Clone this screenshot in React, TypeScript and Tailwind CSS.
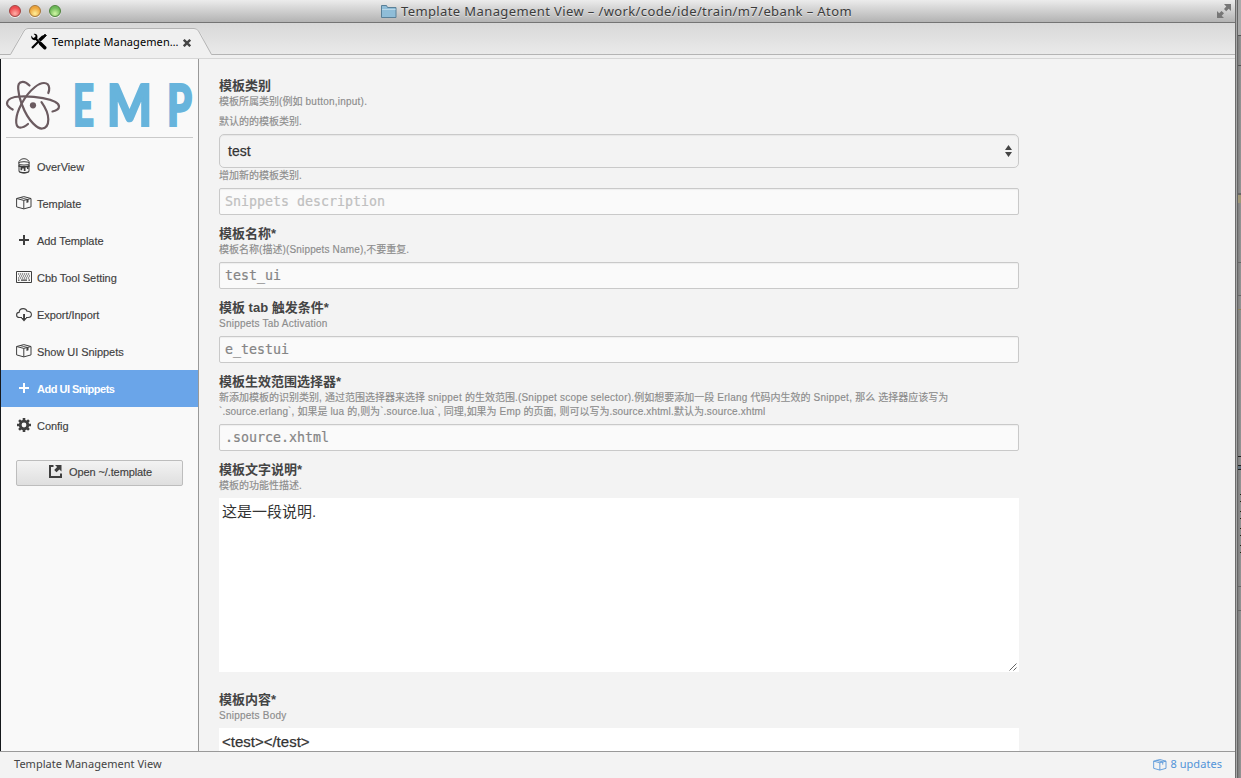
import React from "react";

type IconProps = { className?: string };

const Paintcan = ({ className = "" }: IconProps) => (
  <svg width="16" height="16" viewBox="0 0 16 16" className={className} fill="none" stroke="currentColor">
    <path d="M2.600 5.500C2.600 2.600 5 .7 8 .7s5.400 1.900 5.400 4.800" strokeWidth="1" />
    <ellipse cx="8" cy="5.400" rx="5.300" ry="1.700" strokeWidth="1" />
    <path d="M3 6v7.200c0 1 2 1.700 5 1.700s5-.7 5-1.700V6" />
    <path
      d="M2.500 6.500c1 1.200 3 1.600 5.500 1.600s4.500-.4 5.500-1.600V9h-1v2h-1.500V9.500H9.500V13H7.800v-2.500H6.200v1.800H4.500V9h-2z M3 13c1 .7 3 1 5 1s4-.3 5-1v1c-1 1-3 1.400-5 1.400S4 15 3 14z"
      fill="currentColor"
      stroke="none"
    />
  </svg>
);

const Package = ({ className = "" }: IconProps) => (
  <svg width="16" height="14" viewBox="0 0 16 14" className={className} fill="none" stroke="currentColor">
    <path d="M.6 2.500v8.400l7.200 2 7.200-2V2.500L7.800.6z M.6 2.500l7.200 1.900L15 2.500M7.800 4.400v8.500" strokeWidth="1" />
    <path d="M4 1.500l7.200 1.900" strokeWidth=".8" />
    <path d="M10.500 3.800l2-.6v3l-2 .7z" fill="currentColor" stroke="none" />
  </svg>
);

const Plus = ({ className = "" }: IconProps) => (
  <svg width="16" height="16" viewBox="0 0 16 16" className={className} fill="currentColor">
    <path d="M7 3h2v4h4v2H9v4H7V9H3V7h4z" />
  </svg>
);

const Keyboard = ({ className = "" }: IconProps) => (
  <svg width="16" height="12" viewBox="0 0 16 12" className={className} fill="none" stroke="currentColor">
    <path d="M.5.5h15v11H.5z" />
    <path d="M2 3h12M3 5h11M2 7h12" strokeDasharray="1.200 .8" strokeWidth="1.100" />
    <path d="M2 9.200h1.500M5 9.200h6M12.500 9.200H14" strokeWidth="1.200" />
  </svg>
);

const Cloud = ({ className = "" }: IconProps) => (
  <svg width="16" height="14" viewBox="0 0 16 14" className={className} fill="none" stroke="currentColor">
    <path d="M6 9.500H3.500C1.700 9.500.6 8.300.6 6.900c0-1.500 1.100-2.500 2.500-2.500C3.300 2 5 .6 7.200.6c2 0 3.300 1 3.900 2.700 2.500-.2 4.300 1.100 4.300 3.200 0 1.900-1.500 3-3.400 3h-2" strokeWidth="1.100" />
    <path d="M7.100 6h1.900v4h2L8 13.600 5 10h2.100z" fill="currentColor" stroke="none" />
  </svg>
);

const Gear = ({ className = "" }: IconProps) => (
  <svg width="14" height="14" viewBox="0 0 14 14" className={className}>
    <g stroke="currentColor" strokeWidth="2.600">
      <path d="M7 0v14M0 7h14M2.050 2.050l9.900 9.900M11.950 2.050l-9.900 9.900" />
    </g>
    <circle cx="7" cy="7" r="5.200" fill="currentColor" />
    <circle cx="7" cy="7" r="2.400" fill="#f9f9f9" />
  </svg>
);

const External = () => (
  <svg width="13" height="13" viewBox="0 0 13 13" fill="none" stroke="currentColor" className="-mt-0.5">
    <path d="M4.500 1H1v11h11V8.500" strokeWidth="2" />
    <path d="M6 0h6.500v6.500l-2.100-2.100L7.500 7.300 5.200 5l2.900-2.900z" fill="currentColor" stroke="none" />
  </svg>
);

const Tools = () => (
  <svg width="17" height="17" viewBox="0 0 17 17" fill="none" stroke="#000">
    <path d="M4.500 4.500l7.500 7.500" strokeWidth="2" />
    <path d="M10.500 10.500l4.300 4.300" strokeWidth="3.400" strokeLinecap="round" />
    <path d="M1.500 2.500L3 5l2.200-.4.300-2L3.600.9c2-.6 4 .6 3.900 3L7 6.500 4.800 7.200C2.300 7.300.7 5 1.500 2.500z" fill="#000" stroke="none" />
    <path d="M9.300 7.500L13.500 3.500" strokeWidth="3.400" />
    <path d="M13 3.200l2-2 1.300 1.300-2 2z" fill="#000" />
    <path d="M8.500 8.500L2 15" strokeWidth="2.200" />
  </svg>
);

const Logo = () => (
  <svg width="192" height="56" viewBox="0 0 192 56" className="block overflow-visible">
    <g fill="none" stroke="#6b5b60" strokeWidth="2.200" strokeLinecap="round">
      <path d="M6.700 32.500C4 31 1 29 1 26.500 1 22 7 19.700 14 19.500c8-.3 16 .3 23 1.700 9 1.800 16 4.300 16 8.300 0 2.500-3 4.200-6.500 5" />
      <path d="M23.500 8.500C21 6 19 4.700 16.700 4.800 12.500 5 12 8 12.200 12c.3 4.500 1.500 10 3.500 15 3 8 7.300 15.500 11.600 19.600 3 3 6 5.300 9 4.900 4.500-.6 6-4 6-9 0-5.500-3-12-6.800-17.300" />
      <path d="M22 47c-3 2.500-6 4-8.700 3.500C10.500 50 10 47 10.200 43c.3-5 2.500-11 5.500-16.500C19.500 19.500 24 14 29 10c3-2.500 6-4 9-4 4 0 5 2.500 5.200 5 .1 1.800-.3 3.500-.9 5" />
    </g>
    <circle cx="27" cy="28.300" r="3.100" fill="#6b5b60" />
    <g fill="#67b4dc" stroke="#67b4dc" strokeWidth="2.200" fontFamily="Lato" fontWeight="900" fontSize="57">
      <text x="67" y="49" textLength="21" lengthAdjust="spacingAndGlyphs">E</text>
      <text x="101" y="49" textLength="45" lengthAdjust="spacingAndGlyphs">M</text>
      <text x="161" y="49" textLength="25" lengthAdjust="spacingAndGlyphs">P</text>
    </g>
  </svg>
);

const NAV = [
  { label: "OverView", icon: <Paintcan className="-mt-1" /> },
  { label: "Template", icon: <Package className="-mt-1" /> },
  { label: "Add Template", icon: <Plus className="-mt-1" /> },
  { label: "Cbb Tool Setting", icon: <Keyboard className="-mt-1" /> },
  { label: "Export/Inport", icon: <Cloud className="-mt-px" /> },
  { label: "Show UI Snippets", icon: <Package className="-mt-1" /> },
  { label: "Add UI Snippets", icon: <Plus className="-mt-1" />, active: true },
  { label: "Config", icon: <Gear className="-mt-1" /> },
];

const Label = ({ children }: { children: React.ReactNode }) => (
  <div className="mb-px h-[17px] whitespace-nowrap text-[13px] font-bold leading-[17px] text-[#444]">{children}</div>
);

// Latin runs are tracked slightly wider than the ideographs around them.
const Hint = ({ text, tight }: { text: string; tight?: boolean }) => (
  <div className="whitespace-nowrap text-[10px] leading-[14px] text-[#8c8c8c] [-webkit-text-stroke:0.15px_#8c8c8c]">
    {text.split(/([\x20-\x7e]+)/).map((run, i) =>
      i % 2 ? (
        <span key={i} className={tight ? "tracking-[0.16px]" : "tracking-[0.23px]"}>
          {run}
        </span>
      ) : (
        run
      ),
    )}
  </div>
);

const Field = ({ children, placeholder }: { children: React.ReactNode; placeholder?: boolean }) => (
  <div
    className={`mt-[5px] h-[27px] rounded-[2px] border border-[#c9c9c9] bg-[#fafafa] pl-[5px] font-['DejaVu_Sans_Mono',monospace] text-[13.3px] leading-[25px] shadow-[inset_0_1px_1px_#eee] [-webkit-text-stroke:0.2px_currentColor] ${
      placeholder ? "text-[#c0c0c0]" : "text-[#858585]"
    }`}
  >
    {children}
  </div>
);

const Light = ({ className }: { className: string }) => (
  <span className={`h-3 w-3 rounded-full border shadow-[0_1px_0_#eee] ${className}`} />
);

export default function App() {
  return (
    <div className="flex h-[778px] w-[1241px] overflow-hidden bg-[#8e8e8e] font-['Liberation_Sans','Noto_Sans_CJK_SC',sans-serif] text-[#444]">
      <div className="flex w-[1235px] flex-col bg-[#f3f3f3]">
        <header className="flex h-[23px] shrink-0 items-center border-b border-[#747474] bg-gradient-to-b from-[#ececec] to-[#b3b3b3] font-['Noto_Sans',sans-serif]">
          <div className="flex w-[380px] gap-2 pl-[9px]">
            <Light className="border-[#a24442] bg-[radial-gradient(circle_at_50%_75%,#ffb0a8,#ee4c50_65%)]" />
            <Light className="border-[#a8783a] bg-[radial-gradient(circle_at_50%_75%,#ffef9a,#eda53c_65%)]" />
            <Light className="border-[#4f843d] bg-[radial-gradient(circle_at_50%_75%,#d2f7a5,#6cb857_65%)]" />
          </div>
          <svg width="18" height="15" viewBox="0 0 18 15">
            <path d="M1.500 13.500v-12h5l1 2h8.500v10z" fill="#8fbdd8" stroke="#5a8098" />
            <path d="M2 5.500h13.500" stroke="#b7d7e8" />
          </svg>
          <span className="ml-[3px] mt-[2px] whitespace-nowrap text-[13px] tracking-[0.39px] text-[#3c3c3c] [text-shadow:0_1px_0_#e4e4e4]">
            Template Management View – /work/code/ide/train/m7/ebank – Atom
          </span>
          <svg width="16" height="16" viewBox="0 0 16 16" className="ml-auto mr-[3px]" fill="#777">
            <path d="M8 1h7v7l-2.300-2.300-2.500 2.500L8 6l2.300-2.500z M8 15H1V8l2.200 2.200L5.500 8 8 10.300l-2.300 2.400z" />
          </svg>
        </header>

        <div className="h-[36px] shrink-0 border-b border-[#d6d6d6] bg-gradient-to-b from-[#d8d8d8] to-[#ececec]">
          <div className="grid h-[35px] [grid-template-areas:'bar']">
            <svg width="1235" height="35" viewBox="0 0 1235 35" className="[grid-area:bar]">
              <path d="M0 31.500h10C15 26 19 10 26 5.500h170C204 10 205 24 211.500 31.500H1235V35H0z" fill="#f0f0f0" />
              <path d="M0 31.500h10.500L24 8q1.500-2.500 4-2.500h166q3 0 4.500 2.500l13 23.500H1235" fill="#f0f0f0" stroke="#b4b4b4" />
            </svg>
            <div className="flex h-[35px] items-start pl-[30px] pt-[10px] [grid-area:bar]">
              <Tools />
              <span className="ml-[5px] whitespace-nowrap font-['Noto_Sans',sans-serif] text-[11px] leading-[18px] tracking-[0.1px] text-black">
                Template Managemen…
              </span>
              <svg width="8" height="8" viewBox="0 0 8 8" className="ml-1 mt-[6px]" stroke="#444" strokeWidth="2.400">
                <path d="M.8.8l6.400 6.400M7.200.8L.8 7.200" />
              </svg>
            </div>
          </div>
        </div>

        <div className="flex min-h-0 flex-1">
          <aside className="w-[199px] shrink-0 border-l border-r border-l-[#15181c] border-r-[#999] bg-[#f9f9f9]">
            <div className="ml-[5px] mr-[5px] h-[79px] border-b border-[#cacaca] pt-[18px]">
              <Logo />
            </div>
            <nav className="mt-[10px]">
              {NAV.map((n) => (
                <div
                  key={n.label}
                  className={`flex h-[37px] items-center pl-[15px] pt-[2px] text-[11px] ${
                    n.active ? "bg-[#6aa5e9] font-bold tracking-[-0.5px] text-white" : "tracking-[-0.05px] text-[#3f3f3f] [-webkit-text-stroke:0.15px_#3f3f3f]"
                  }`}
                >
                  <span className="flex w-4 justify-center">{n.icon}</span>
                  <span className="ml-[5px] whitespace-nowrap">{n.label}</span>
                </div>
              ))}
            </nav>
            <div className="ml-[15px] mt-[16px] flex h-[26px] w-[167px] items-center justify-center gap-[7px] rounded-[2px] border border-[#bdbdbd] bg-gradient-to-b from-[#f3f3f3] to-[#dfdfdf] pb-px pl-[2px] text-[11px] tracking-[-0.1px] text-[#3f3f3f] [-webkit-text-stroke:0.15px_#3f3f3f]">
              <External />
              <span>Open ~/.template</span>
            </div>
          </aside>

          <main className="min-w-0 flex-1 overflow-hidden pl-[20px] pt-[18px]">
            <div className="w-[800px]">
              <Label>模板类别</Label>
              <Hint text="模板所属类别(例如 button,input)." />
              <div className="mt-[6px]">
                <Hint text="默认的的模板类别." />
              </div>
              <div className="mt-[5px] flex h-[34px] items-center justify-between rounded-[5px] border border-[#c9c9c9] pl-[8px] pr-[6px] text-[14px] text-[#333] shadow-[inset_0_1px_1px_#e6e6e6] [-webkit-text-stroke:0.25px_#333]">
                <span>test</span>
                <svg width="7" height="12" viewBox="0 0 7 12" fill="#444">
                  <path d="M3.500 0L7 5H0zM3.500 12L7 7H0z" />
                </svg>
              </div>
              <div className="mt-px">
                <Hint text="增加新的模板类别." />
              </div>
              <div className="mb-[10px] mt-[5px]">
                <Field placeholder>Snippets description</Field>
              </div>

              <Label>模板名称*</Label>
              <Hint tight text="模板名称(描述)(Snippets Name),不要重复." />
              <Field>test_ui</Field>

              <div className="mt-[10px]">
                <Label>模板 tab 触发条件*</Label>
                <Hint text="Snippets Tab Activation" />
                <Field>e_testui</Field>
              </div>

              <div className="mt-[10px]">
                <Label>模板生效范围选择器*</Label>
                <Hint text="新添加模板的识别类别, 通过范围选择器来选择 snippet 的生效范围.(Snippet scope selector).例如想要添加一段 Erlang 代码内生效的 Snippet, 那么 选择器应该写为" />
                <Hint tight text="`.source.erlang`, 如果是 lua 的,则为`.source.lua`, 同理,如果为 Emp 的页面, 则可以写为.source.xhtml.默认为.source.xhtml" />
                <Field>.source.xhtml</Field>
              </div>

              <div className="mt-[10px]">
                <Label>模板文字说明*</Label>
                <Hint text="模板的功能性描述." />
                <div className="mt-[5px] flex h-[174px] items-start justify-between bg-white pl-[3px] pt-[4px] text-[15px] leading-[19px] text-[#333]">
                  <span>这是一段说明.</span>
                  <svg width="8" height="8" viewBox="0 0 8 8" className="mb-[1px] mr-[2px] self-end" stroke="#555" strokeWidth=".9">
                    <path d="M.5 7.500l7-7M4.500 7.500l3-3" />
                  </svg>
                </div>
              </div>

              <div className="mt-[19px]">
                <Label>模板内容*</Label>
                <Hint text="Snippets Body" />
                <div className="mt-[5px] h-[60px] bg-white pl-[3px] pt-[4px] text-[15px] leading-[19px] text-[#333] [-webkit-text-stroke:0.25px_#333]">
                  &lt;test&gt;&lt;/test&gt;
                </div>
              </div>
            </div>
          </main>
        </div>

        <footer className="flex h-[27px] shrink-0 items-center justify-between border-t border-[#999] pb-px pl-[14px] pr-[13px] font-['Noto_Sans',sans-serif] text-[11px]">
          <span className="tracking-[0.03px]">Template Management View</span>
          <span className="flex items-center gap-[3px] text-[#5293d8]">
            <svg width="14" height="12" viewBox="0 0 16 14" fill="none" stroke="currentColor">
              <path d="M.6 2.500v8.400l7.200 2 7.200-2V2.500L7.800.6z M.6 2.500l7.200 1.900L15 2.500M7.800 4.400v8.500M4 1.500l7.200 1.900v3.200" />
            </svg>
            <span className="tracking-[0.05px]">8 updates</span>
          </span>
        </footer>
      </div>

      <div className="w-px bg-[#6c6c6c]" />
      <div className="w-px bg-[#a8a8a8]" />
      <div className="w-px bg-[#656565]" />
      <div className="flex flex-1 flex-col bg-gradient-to-r from-[#7c7c7c] to-[#969696]">
        <div className="h-[36px] border-b border-[#555] bg-[#aaa]" />
        <div className="h-[30px] border-b border-[#555]" />
        <div className="h-[129px] border-b-2 border-[#666]" />
        <div className="h-[8px] bg-[#a19879]" />
        <div className="h-[60px] border-b border-[#666]" />
        <div className="h-[33px] border-b border-[#666]" />
        <div className="h-[14px] border-b border-[#8c825c]" />
        <div className="h-[147px] border-b border-[#222]" />
        <div className="mt-2 h-[5px] border-y border-[#222] bg-[#62717c]" />
        <div className="ml-[2px] mt-6 flex flex-col gap-[9px]">
          <div className="h-[8px] border-y border-[#221]" />
          <div className="h-[8px] border-y border-[#221]" />
          <div className="h-[8px] border-y border-[#221]" />
          <div className="h-[8px] border-y border-[#221]" />
        </div>
        <div className="mt-[33px] h-[25px] border-y border-[#666]" />
      </div>
    </div>
  );
}
